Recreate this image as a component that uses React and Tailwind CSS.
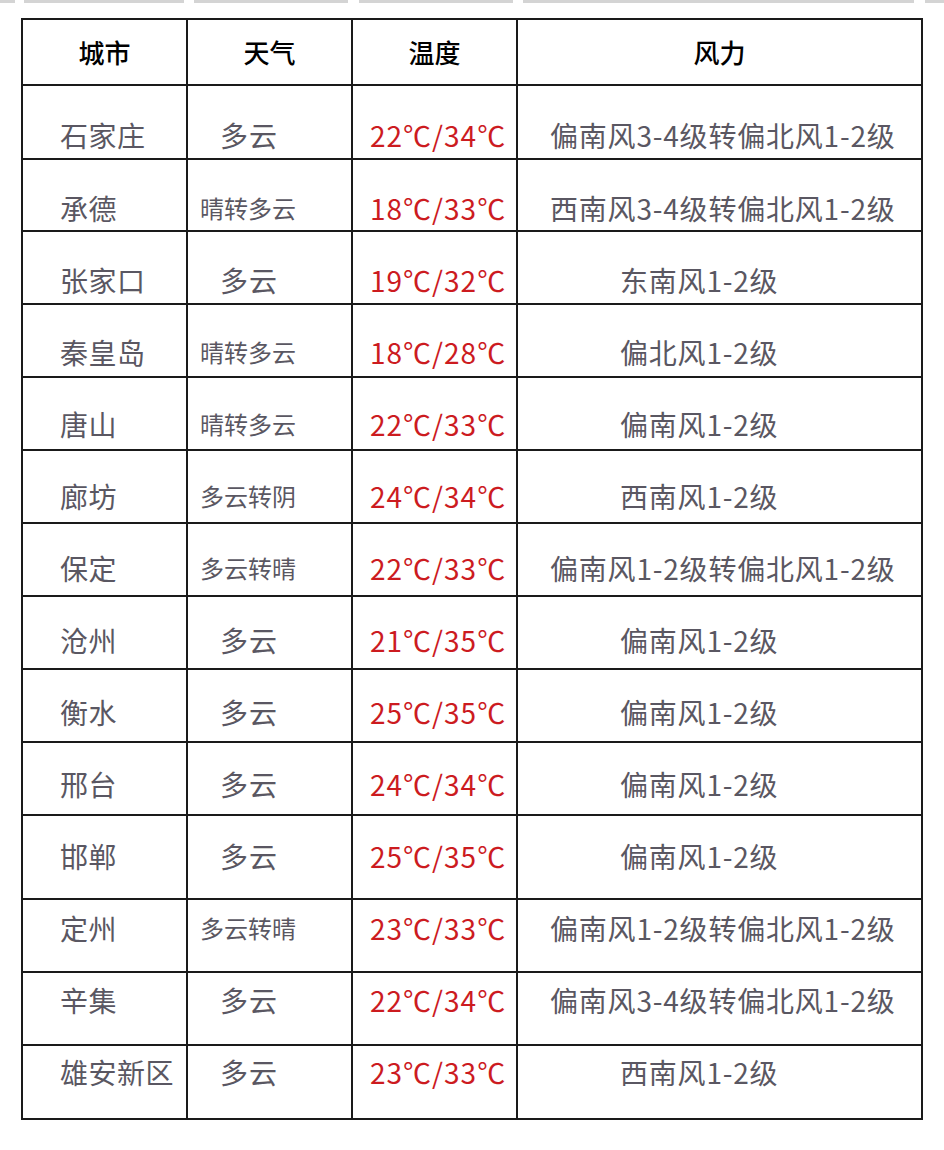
import React from "react";

// rows of the forecast table, row heights and top padding follow the picture
const rows = [
    { city: "石家庄", weather: "多云", temp: "22℃/34℃", wind: "偏南风3-4级转偏北风1-2级", h: "h-[72px] pt-[31px]" },
    { city: "承德", weather: "晴转多云", temp: "18℃/33℃", wind: "西南风3-4级转偏北风1-2级", h: "h-[70px] pt-[30px]" },
    { city: "张家口", weather: "多云", temp: "19℃/32℃", wind: "东南风1-2级", h: "h-[71px] pt-[30px]" },
    { city: "秦皇岛", weather: "晴转多云", temp: "18℃/28℃", wind: "偏北风1-2级", h: "h-[71px] pt-[29px]" },
    { city: "唐山", weather: "晴转多云", temp: "22℃/33℃", wind: "偏南风1-2级", h: "h-[71px] pt-[28px]" },
    { city: "廊坊", weather: "多云转阴", temp: "24℃/34℃", wind: "西南风1-2级", h: "h-[71px] pt-[27px]" },
    { city: "保定", weather: "多云转晴", temp: "22℃/33℃", wind: "偏南风1-2级转偏北风1-2级", h: "h-[71px] pt-[26px]" },
    { city: "沧州", weather: "多云", temp: "21℃/35℃", wind: "偏南风1-2级", h: "h-[71px] pt-[25px]" },
    { city: "衡水", weather: "多云", temp: "25℃/35℃", wind: "偏南风1-2级", h: "h-[71px] pt-[24px]" },
    { city: "邢台", weather: "多云", temp: "24℃/34℃", wind: "偏南风1-2级", h: "h-[71px] pt-[23px]" },
    { city: "邯郸", weather: "多云", temp: "25℃/35℃", wind: "偏南风1-2级", h: "h-[82px] pt-[22px]" },
    { city: "定州", weather: "多云转晴", temp: "23℃/33℃", wind: "偏南风1-2级转偏北风1-2级", h: "h-[71px] pt-[10px]" },
    { city: "辛集", weather: "多云", temp: "22℃/34℃", wind: "偏南风3-4级转偏北风1-2级", h: "h-[71px] pt-[9px]" },
    { city: "雄安新区", weather: "多云", temp: "23℃/33℃", wind: "西南风1-2级", h: "h-[72px] pt-[8px]" },
];

export default function App() {
    return (
        <div className="w-[944px] h-[1150px] bg-white overflow-hidden" style={{ fontFamily: '"Noto Sans CJK SC", "Noto Sans", sans-serif' }}>
            {/* grey leftovers of the picture above */}
            <div className="flex h-[3px]">
                <div className="w-[15px] bg-[#d4d4d4]"></div>
                <div className="w-[160px] ml-[9px] bg-[#d4d4d4]"></div>
                <div className="w-[154px] ml-[10px] bg-[#d4d4d4]"></div>
                <div className="w-[154px] ml-[11px] bg-[#d4d4d4]"></div>
                <div className="w-[391px] ml-[10px] bg-[#d4d4d4]"></div>
                <div className="w-[19px] ml-[11px] bg-[#d4d4d4]"></div>
            </div>

            <div className="ml-[21px] mt-[15px] w-[902px] border-2 border-[#1a1a1a]">
                {/* header */}
                <div className="flex h-[66px] border-b-2 border-[#1a1a1a] text-[26px] font-medium text-black leading-[64px]">
                    <div className="w-[165px] border-r-2 border-[#1a1a1a] text-center">城市</div>
                    <div className="w-[165px] border-r-2 border-[#1a1a1a] text-center">天气</div>
                    <div className="w-[165px] border-r-2 border-[#1a1a1a] text-center">温度</div>
                    <div className="flex-1 text-center">风力</div>
                </div>

                {rows.map((r, i) => {
                    const last = i === rows.length - 1;
                    const small = r.weather.length > 2;
                    const long = r.wind.length > 8;
                    return (
                        <div
                            key={r.city}
                            className={
                                "flex whitespace-nowrap text-[28px] leading-[36px] text-[#5a5762] " +
                                (last ? "" : "border-b-2 border-[#1a1a1a]")
                            }
                        >
                            <div className={"w-[165px] border-r-2 border-[#1a1a1a] pl-[37px] tracking-[0.5px] " + r.h}>{r.city}</div>
                            <div className={"w-[165px] border-r-2 border-[#1a1a1a] " + r.h + (small ? " pl-[12px] text-[24px]" : " pl-[32px] tracking-[1px]")}>
                                {r.weather}
                            </div>
                            <div className={"w-[165px] border-r-2 border-[#1a1a1a] pl-[17px] tracking-[1px] text-[#cc1b1f] " + r.h}>{r.temp}</div>
                            <div className={"flex-1 tracking-[0.8px] " + r.h + (long ? " pl-[32px]" : " pl-[102px]")}>{r.wind}</div>
                        </div>
                    );
                })}
            </div>
        </div>
    );
}
